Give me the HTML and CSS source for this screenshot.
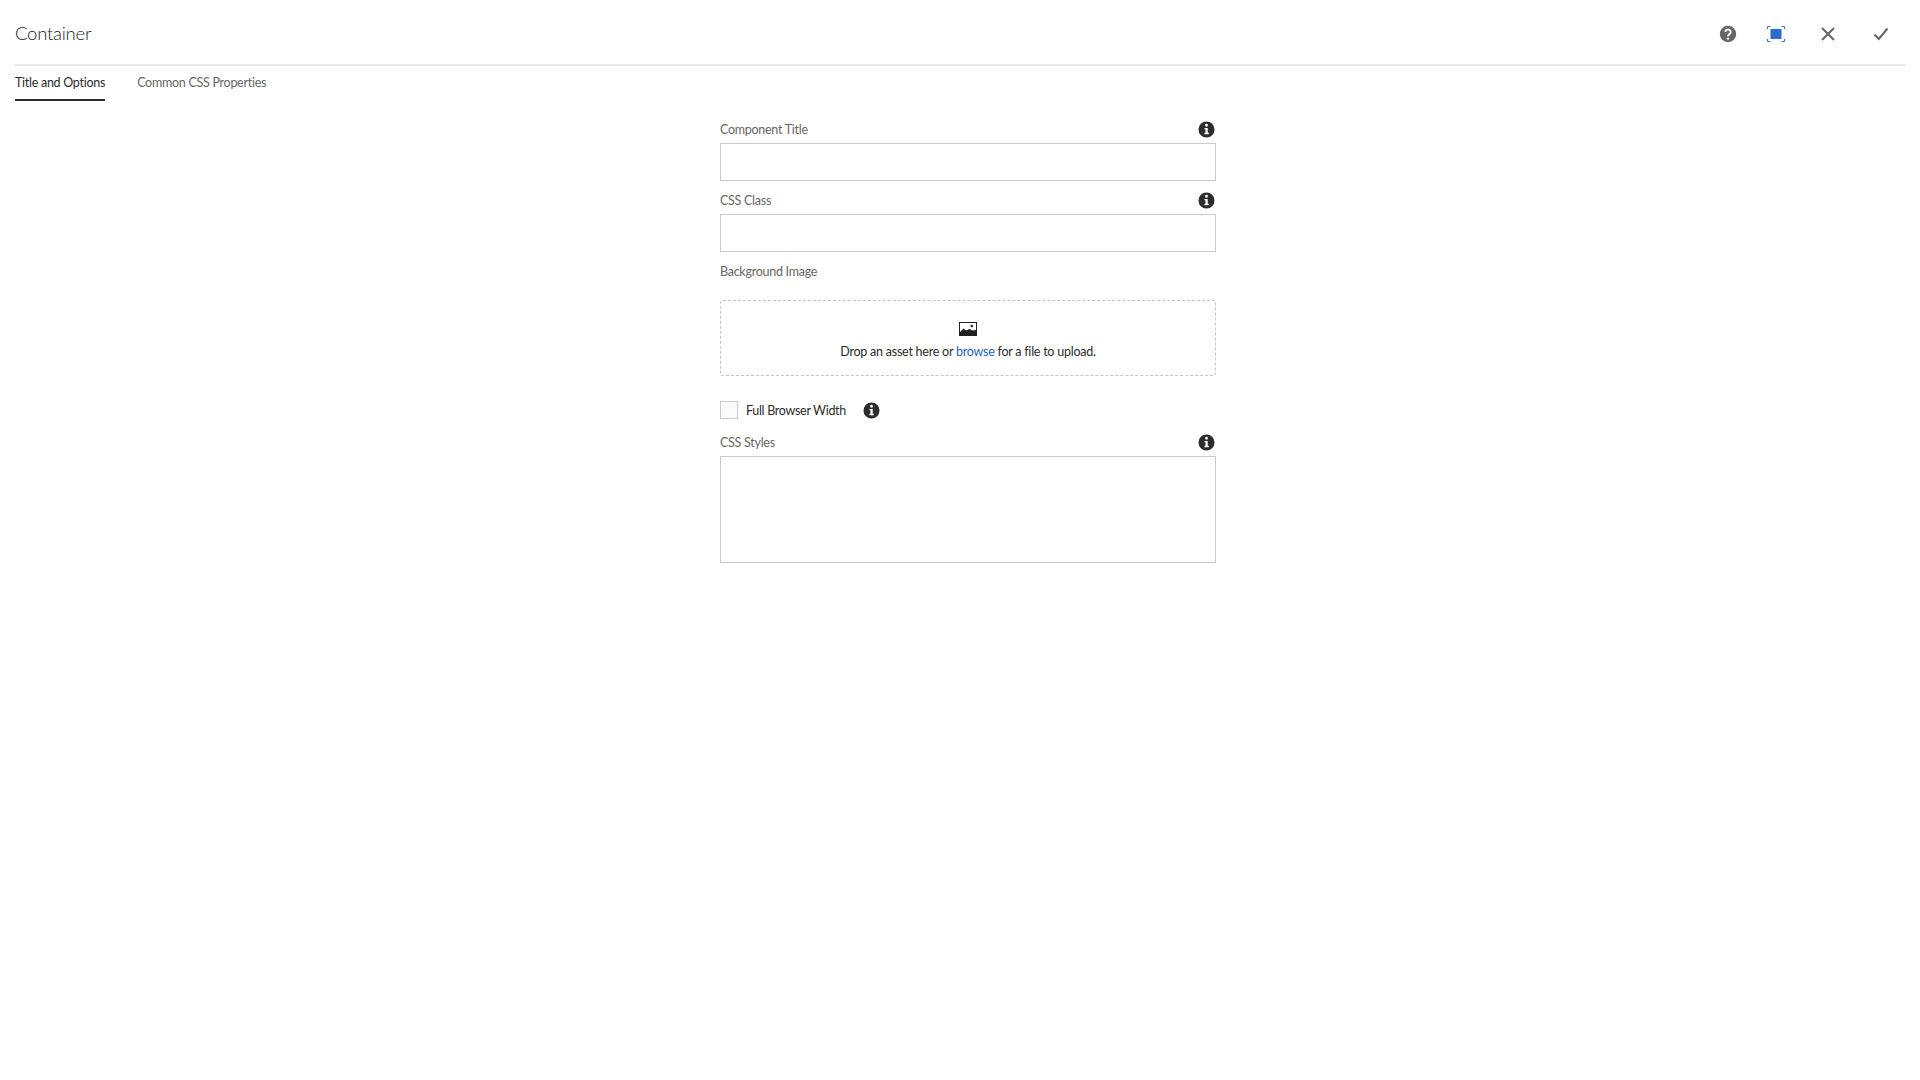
FILE: index.html
```html
<!DOCTYPE html>
<html lang="en">
<head>
<meta charset="utf-8">
<title>Container</title>
<link rel="stylesheet" href="styles.css">
</head>
<body>
<svg class="defs" width="0" height="0" aria-hidden="true">
  <symbol id="info" viewBox="0 0 18 18">
    <path fill-rule="evenodd" d="M9 .5a8.500 8.500 0 1 1 0 17 8.500 8.500 0 0 1 0-17ZM9 3a1.500 1.500 0 1 0 0 3 1.500 1.500 0 0 0 0-3ZM6.800 7.300v1.500h1.100v3.700H6.800V14h4.600v-1.500h-1.100V7.300Z"/>
  </symbol>
</svg>
<header class="top">
  <h1 class="title">Container</h1>
  <div class="actions">
    <svg class="act act-help" viewBox="0 0 18 18"><circle cx="9" cy="9" r="8.200" fill="#666"/><path d="M6.300 7a2.700 2.500 0 1 1 4.200 2.100C9.500 9.800 9 10.200 9 11.200" fill="none" stroke="#fff" stroke-width="1.900"/><circle cx="9" cy="13.600" r="1.200" fill="#fff"/></svg>
    <svg class="act act-full" viewBox="0 0 18 18"><rect x="3.500" y="4" width="11" height="10" fill="#2d6bcf"/><path d="M.5 4V1.500h3M14.500 1.500h3V4M17.500 14v2.500h-3M3.500 16.500h-3V14" fill="none" stroke="#3b73d1" stroke-width="1"/></svg>
    <svg class="act act-close" viewBox="0 0 18 18"><path d="M3 3l12 12M15 3L3 15" fill="none" stroke="#666" stroke-width="2"/></svg>
    <svg class="act act-done" viewBox="0 0 18 18"><path d="M2.500 9.500l4.300 4.500L15.500 3.500" fill="none" stroke="#666" stroke-width="2"/></svg>
  </div>
</header>
<nav class="tabs">
  <a class="tab tab-on">Title and Options</a>
  <a class="tab">Common CSS Properties</a>
</nav>
<main class="form">
  <div class="label-row"><label class="label">Component Title</label><svg class="info"><use href="#info"/></svg></div>
  <input class="field" type="text">
  <div class="label-row"><label class="label">CSS Class</label><svg class="info"><use href="#info"/></svg></div>
  <input class="field" type="text">
  <div class="label-row"><label class="label">Background Image</label></div>
  <div class="drop">
    <svg class="drop-icon" viewBox="0 0 18 14"><path fill-rule="evenodd" d="M0 0h18v14H0ZM1 1v9l3.500-3.500 2.500 2 3.500-1.500 3 1.500L17 8V1Z" fill="#222"/><circle cx="12.800" cy="4" r="1.300" fill="#222"/></svg>
    <p class="drop-text">Drop an asset here or <a class="link">browse</a> for a file to upload.</p>
  </div>
  <div class="check-row">
    <span class="box"></span>
    <span class="check-label">Full Browser Width</span>
    <svg class="info"><use href="#info"/></svg>
  </div>
  <div class="label-row label-row-tight"><label class="label">CSS Styles</label><svg class="info"><use href="#info"/></svg></div>
  <textarea class="area"></textarea>
</main>
</body>
</html>
```
FILE: styles.css
```css
* { box-sizing: border-box; }
html, body { margin: 0; height: 100%; background: #fff; }
body { font-family: Lato, "Noto Sans", sans-serif; font-size: 12.5px; color: #4b4b4b; overflow: hidden; }
.defs { display: block; height: 0; }
.top { height: 66px; margin: 0 15px; border-bottom: 2px solid #eaeaea; display: flex; align-items: center; justify-content: space-between; padding-top: 2px; }
.title { margin: 0; font-size: 18.5px; font-weight: 300; color: #222; letter-spacing: -.25px; }
.actions { display: flex; align-items: center; margin: 1px 15px 0 0; }
.act { width: 18px; height: 18px; flex: none; }
.act-full { margin-left: 30px; }
.act-close { margin-left: 34px; }
.act-done { margin-left: 35px; }
.tabs { display: flex; gap: 32px; margin: 0 15px; height: 35px; }
.tab { font-size: 12.5px; letter-spacing: -.27px; color: #666; line-height: 18px; padding-top: 8px; height: 35px; }
.tab-on { color: #2c2c2c; border-bottom: 2px solid #2c2c2c; }
.form { width: 496px; margin-left: 720px; padding-top: 16px; display: flex; flex-direction: column; }
.label-row { height: 33px; display: flex; align-items: flex-start; justify-content: space-between; padding: 11px 1px 0 0; }
.form > .label-row:first-child { height: 26px; padding-top: 4px; }
.label { font-size: 12.5px; letter-spacing: -.27px; line-height: 18px; color: #666; }
.info { width: 17px; height: 17px; fill: #2c2c2c; flex: none; }
.field { display: block; width: 100%; height: 38px; border: 1px solid #cacaca; background: #fff; padding: 0; margin: 0; outline: 0; }
.drop { margin-top: 15px; height: 76px; border: 1px dashed #c4c4c4; border-radius: 3px; display: flex; flex-direction: column; align-items: center; padding-top: 21px; }
.drop-icon { width: 18px; height: 14px; display: block; }
.drop-text { margin: 7px 0 0; font-size: 12.5px; letter-spacing: -.24px; line-height: 18px; color: #2c2c2c; }
.link { color: #1d5fbf; }
.check-row { margin-top: 25px; height: 18px; display: flex; align-items: center; }
.box { width: 18px; height: 18px; border: 1px solid #cacaca; background: #fbfbfb; flex: none; }
.check-label { margin-left: 8px; font-size: 12.5px; letter-spacing: -.3px; color: #2c2c2c; margin-right: 17px; }
.form > .label-row-tight { height: 37px; padding-top: 15px; }
.area { display: block; width: 100%; height: 107px; border: 1px solid #cacaca; background: #fff; padding: 0; margin: 0; outline: 0; resize: none; }
```
